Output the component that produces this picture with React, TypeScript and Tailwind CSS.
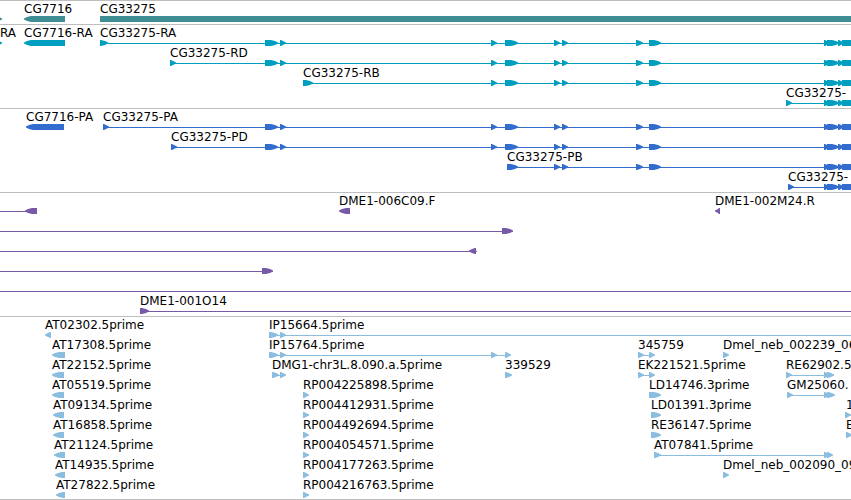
type Span = [start: number, end: number];

interface Label {
  x: number;
  text: string;
}

interface Feature {
  dir: 'left' | 'right' | 'none';
  blocks: Span[];
  line?: Span;
}

interface Row {
  labels: Label[];
  features: Feature[];
}

interface Track {
  name: string;
  color: string;
  rows: Row[];
}

// features that run past the right side of the view
const EDGE = 4000;

const lbl = (x: number, text: string): Label => ({ x, text });
const left = (...blocks: Span[]): Feature => ({ dir: 'left', blocks });
const right = (...blocks: Span[]): Feature => ({ dir: 'right', blocks });
const linked = (start: number, end: number, ...blocks: Span[]): Feature => ({
  dir: 'right',
  blocks,
  line: [start, end],
});

const tailExons: Span[] = [[824, 830], [827, 839], [838, 844], [842, 858]];
const lateExons: Span[] = [[554, 560], [562, 568], [636, 643], [649, 661], ...tailExons];
const midExons: Span[] = [[491, 497], [505, 518], ...lateExons];
const allExons: Span[] = [[265, 278], [280, 286], ...midExons];

const tracks: Track[] = [
  {
    name: 'Genes',
    color: '#3e8e94',
    rows: [
      {
        labels: [lbl(24, 'CG7716'), lbl(100, 'CG33275')],
        features: [right([-12, 2]), left([24, 65]), { dir: 'none', blocks: [[100, EDGE]] }],
      },
    ],
  },
  {
    name: 'Transcripts',
    color: '#009ebf',
    rows: [
      {
        labels: [lbl(0, 'RA'), lbl(24, 'CG7716-RA'), lbl(100, 'CG33275-RA')],
        features: [right([-12, 2]), left([24, 65]), linked(100, EDGE, [100, 108], ...allExons)],
      },
      { labels: [lbl(170, 'CG33275-RD')], features: [linked(170, EDGE, [170, 176], ...allExons)] },
      { labels: [lbl(303, 'CG33275-RB')], features: [linked(303, EDGE, [303, 313], ...midExons)] },
      { labels: [lbl(786, 'CG33275-')], features: [linked(786, EDGE, [786, 792], ...tailExons)] },
    ],
  },
  {
    name: 'Proteins',
    color: '#326dcd',
    rows: [
      {
        labels: [lbl(26, 'CG7716-PA'), lbl(103, 'CG33275-PA')],
        features: [left([26, 64]), linked(103, EDGE, [103, 109], ...allExons)],
      },
      { labels: [lbl(171, 'CG33275-PD')], features: [linked(171, EDGE, [171, 177], ...allExons)] },
      { labels: [lbl(507, 'CG33275-PB')], features: [linked(507, EDGE, [507, 518], ...lateExons)] },
      { labels: [lbl(788, 'CG33275-')], features: [linked(788, EDGE, [788, 794], ...tailExons)] },
    ],
  },
  {
    name: 'Clones',
    color: '#7859a8',
    rows: [
      {
        labels: [lbl(339, 'DME1-006C09.F'), lbl(715, 'DME1-002M24.R')],
        features: [{ dir: 'left', blocks: [[25, 37]], line: [0, 37] }, left([339, 350], [715, 720])],
      },
      { labels: [], features: [linked(0, 513, [502, 513])] },
      { labels: [], features: [{ dir: 'left', blocks: [[469, 476]], line: [0, 477] }] },
      { labels: [], features: [linked(0, 273, [262, 273])] },
      { labels: [], features: [linked(0, EDGE)] },
      { labels: [lbl(140, 'DME1-001O14')], features: [linked(140, EDGE, [140, 149])] },
    ],
  },
  {
    name: 'ESTs',
    color: '#8abde0',
    rows: [
      {
        labels: [lbl(45, 'AT02302.5prime'), lbl(269, 'IP15664.5prime')],
        features: [left([45, 51]), linked(269, EDGE, [269, 278], [280, 286])],
      },
      {
        labels: [
          lbl(52, 'AT17308.5prime'),
          lbl(269, 'IP15764.5prime'),
          lbl(638, '345759'),
          lbl(723, 'Dmel_neb_002239_06'),
        ],
        features: [
          left([52, 65]),
          linked(269, 510, [269, 278], [280, 286], [491, 497], [505, 511]),
          linked(638, 654, [638, 644], [649, 655]),
          right([723, 729]),
        ],
      },
      {
        labels: [
          lbl(52, 'AT22152.5prime'),
          lbl(272, 'DMG1-chr3L.8.090.a.5prime'),
          lbl(505, '339529'),
          lbl(638, 'EK221521.5prime'),
          lbl(786, 'RE62902.5'),
        ],
        features: [
          left([52, 64]),
          linked(272, 285, [272, 279], [280, 286]),
          right([505, 512]),
          linked(638, 654, [638, 644], [649, 655]),
          linked(786, 833, [786, 792], [824, 830], [827, 834]),
        ],
      },
      {
        labels: [
          lbl(52, 'AT05519.5prime'),
          lbl(303, 'RP004225898.5prime'),
          lbl(649, 'LD14746.3prime'),
          lbl(787, 'GM25060.'),
        ],
        features: [
          left([52, 64]),
          right([303, 309], [649, 661]),
          linked(787, 834, [787, 793], [824, 830], [827, 835]),
        ],
      },
      {
        labels: [
          lbl(53, 'AT09134.5prime'),
          lbl(303, 'RP004412931.5prime'),
          lbl(651, 'LD01391.3prime'),
          lbl(846, '1'),
        ],
        features: [left([53, 64]), right([303, 309], [651, 661], [845, 851])],
      },
      {
        labels: [
          lbl(53, 'AT16858.5prime'),
          lbl(303, 'RP004492694.5prime'),
          lbl(651, 'RE36147.5prime'),
          lbl(846, 'E'),
        ],
        features: [left([53, 64]), right([303, 309], [651, 661], [846, 852])],
      },
      {
        labels: [lbl(54, 'AT21124.5prime'), lbl(303, 'RP004054571.5prime'), lbl(654, 'AT07841.5prime')],
        features: [
          left([54, 65]),
          right([303, 309]),
          linked(654, 832, [654, 661], [824, 830], [827, 833]),
        ],
      },
      {
        labels: [
          lbl(55, 'AT14935.5prime'),
          lbl(303, 'RP004177263.5prime'),
          lbl(723, 'Dmel_neb_002090_09'),
        ],
        features: [left([55, 65]), right([303, 309], [723, 729])],
      },
      {
        labels: [lbl(56, 'AT27822.5prime'), lbl(303, 'RP004216763.5prime')],
        features: [left([56, 65]), right([303, 309])],
      },
    ],
  },
];

function blockPoints([start, end]: Span, dir: Feature['dir']) {
  if (dir === 'none') return `${start},0 ${end},0 ${end},6 ${start},6`;
  const tip = dir === 'right' ? end : start;
  const base = dir === 'right' ? start : end;
  const sign = dir === 'right' ? 1 : -1;
  const neck = tip - sign * Math.min(7, end - start - 1);
  const mid = tip - sign * 3;
  return [
    `${base},0`,
    `${neck},0`,
    `${mid},1`,
    `${tip},2.5`,
    `${tip},3.5`,
    `${mid},5`,
    `${neck},6`,
    `${base},6`,
  ].join(' ');
}

function TrackRow({ row, color }: { row: Row; color: string }) {
  return (
    <div className="relative">
      <div className="h-3.5 text-xs leading-3.5">
        {row.labels.map((label) => (
          <span key={label.text} className="absolute top-0 whitespace-nowrap" style={{ left: label.x }}>
            {label.text}
          </span>
        ))}
      </div>
      <svg className="block h-1.5 w-full" fill={color} aria-hidden="true">
        {row.features.map((feature, i) => (
          <g key={i}>
            {feature.line && (
              <rect x={feature.line[0]} y={3} width={feature.line[1] - feature.line[0]} height={1} />
            )}
            {feature.blocks.map((block) => (
              <polygon key={block[0]} points={blockPoints(block, feature.dir)} />
            ))}
          </g>
        ))}
      </svg>
    </div>
  );
}

export default function App() {
  return (
    <main className="overflow-hidden border-b border-[#bebebe] bg-white font-['DejaVu_Sans',sans-serif] text-black">
      {tracks.map((track) => (
        <section
          key={track.name}
          aria-label={track.name}
          className="border-t border-[#bebebe] pt-px pb-0.5 last:pb-px"
        >
          {track.rows.map((row, i) => (
            <TrackRow key={i} row={row} color={track.color} />
          ))}
        </section>
      ))}
    </main>
  );
}
